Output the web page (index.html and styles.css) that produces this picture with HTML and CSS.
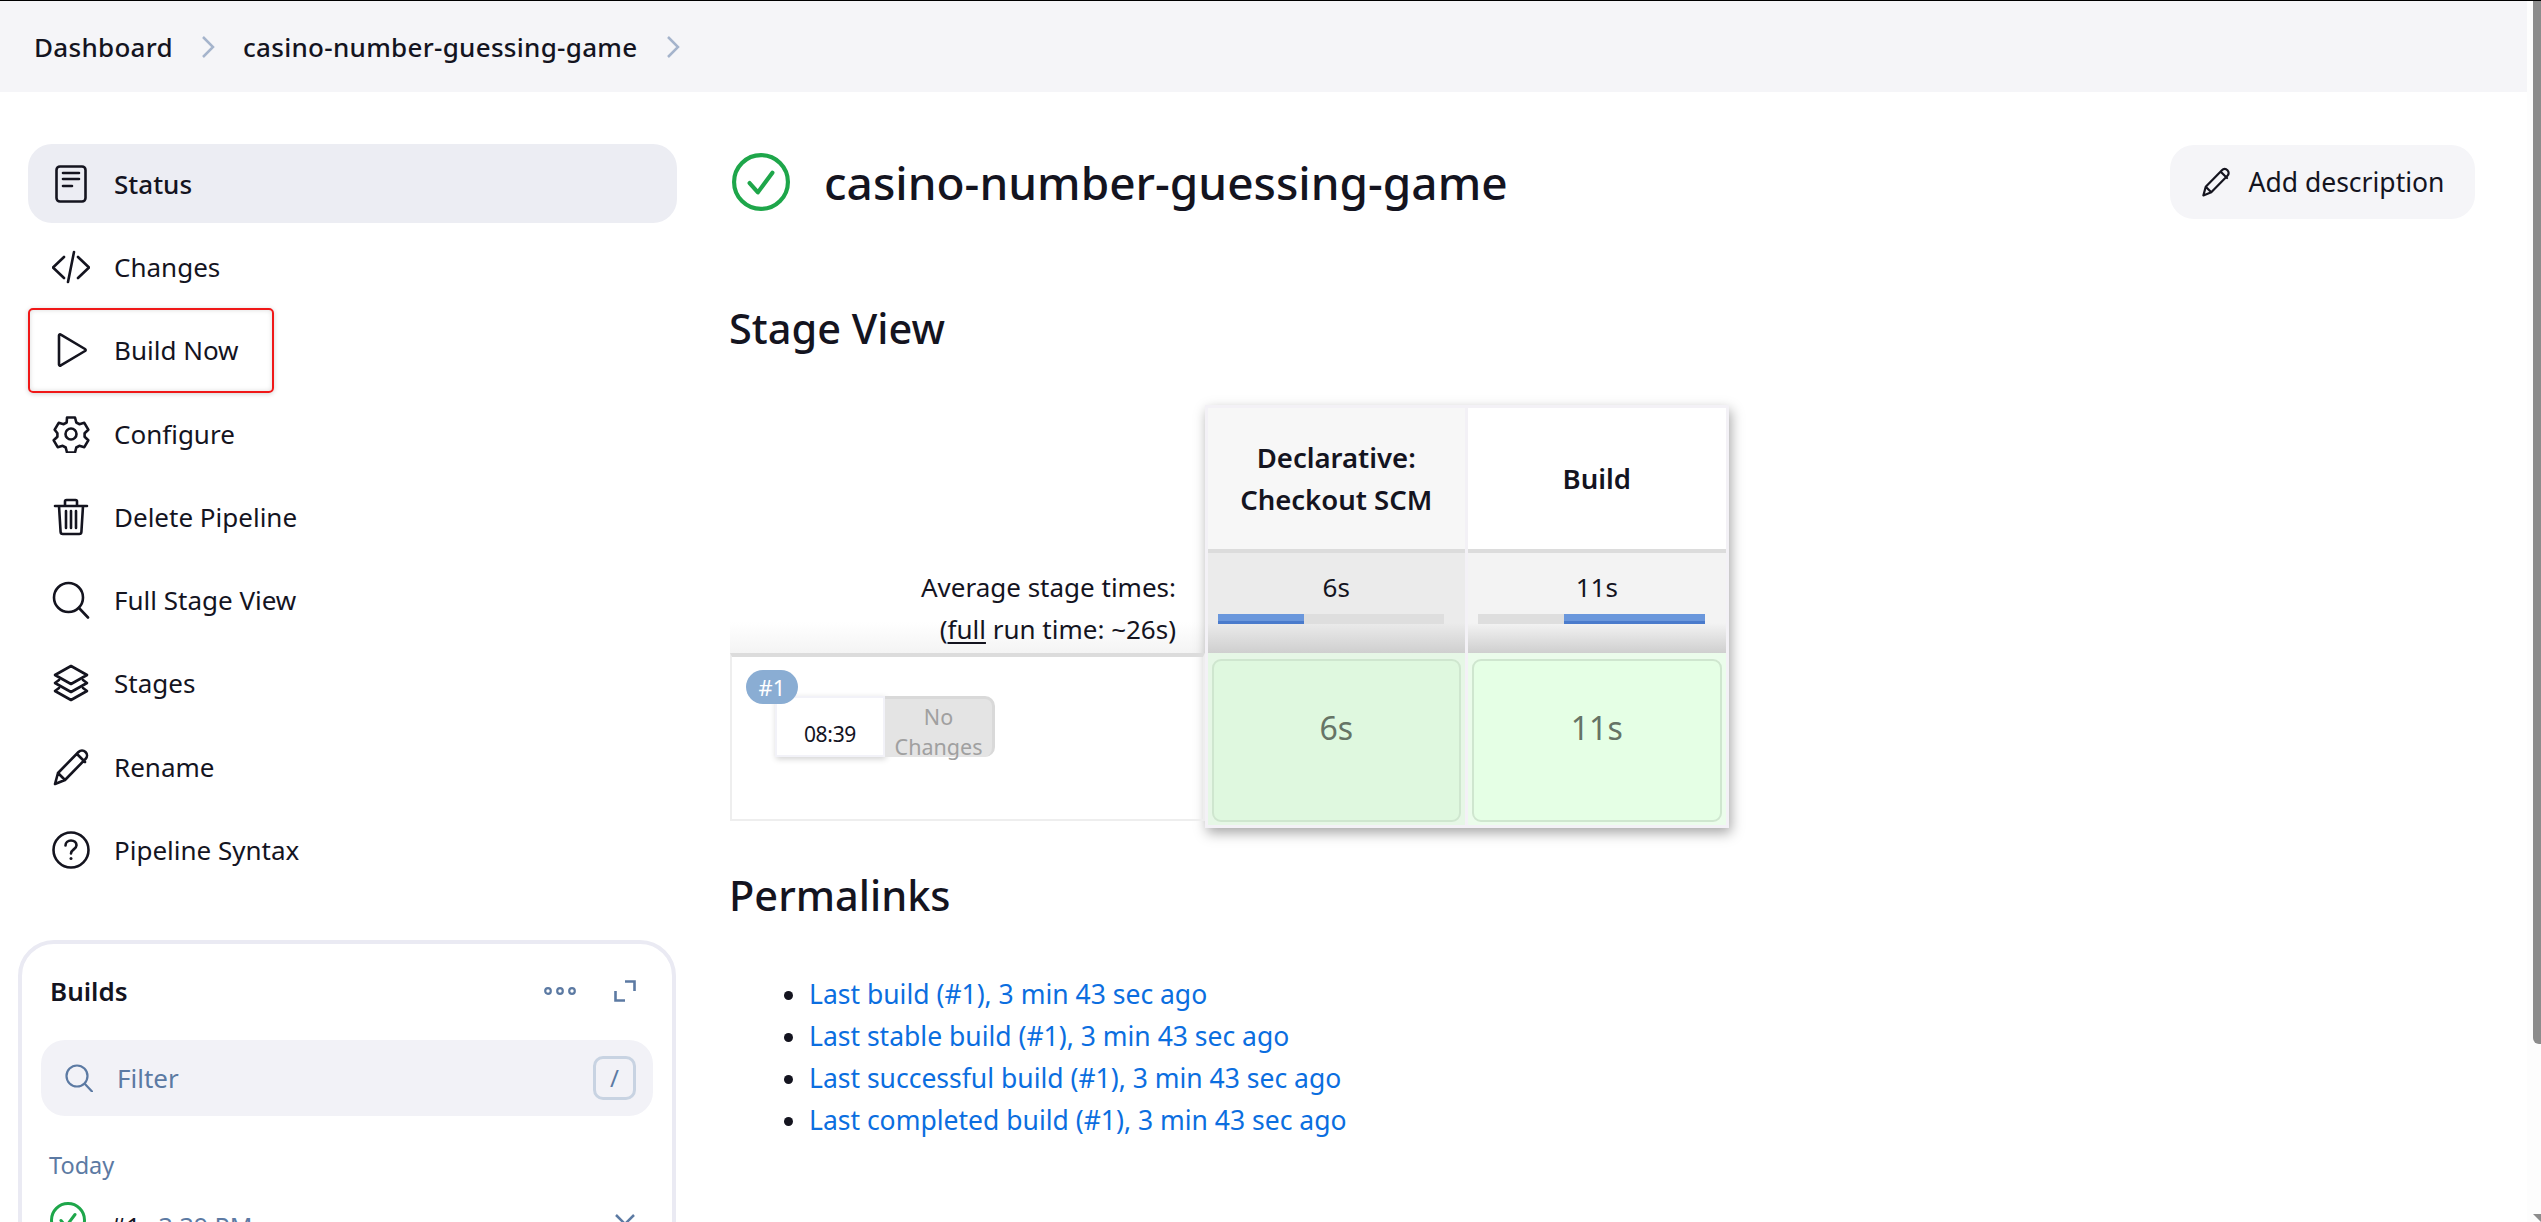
FILE: index.html
```html
<!DOCTYPE html>
<html lang="en">
<head>
<meta charset="utf-8">
<title>casino-number-guessing-game</title>
<link rel="stylesheet" href="styles.css">
</head>
<body>
<div class="page">
  <nav class="crumbs">
    <a class="crumb">Dashboard</a>
    <svg class="crumb-sep" viewBox="0 0 16 30"><path d="M3 5l10 10L3 25"/></svg>
    <a class="crumb">casino-number-guessing-game</a>
    <svg class="crumb-sep" viewBox="0 0 16 30"><path d="M3 5l10 10L3 25"/></svg>
  </nav>
  <div class="layout">
    <aside class="side">
      <ul class="tasks">
        <li class="task active">
          <svg class="ti" viewBox="0 0 38 38"><rect x="4.500" y="1.500" width="29" height="35" rx="3.500"/><path d="M11 8h16M11 14h16M11 21h9"/></svg>
          <span>Status</span>
        </li>
        <li class="task">
          <svg class="ti" viewBox="0 0 38 38"><path d="M12 9L1 19.500 12 30M26 9l11 10.500L26 30M22 4l-6 30"/></svg>
          <span>Changes</span>
        </li>
        <li class="task boxed">
          <svg class="ti" viewBox="0 0 38 38"><path d="M7 4.500c0-1 1-1.500 1.800-.9L33 18c.9.6.9 1.400 0 2L8.800 34.400c-.8.6-1.800.1-1.800-.9z"/></svg>
          <span>Build Now</span>
        </li>
        <li class="task">
          <svg class="ti" viewBox="0 0 38 38"><path d="M15 2.500h8l1.300 5 3 1.700 5-1.400 4 6.900-3.700 3.600v3.400l3.700 3.600-4 6.900-5-1.400-3 1.700-1.300 5h-8l-1.300-5-3-1.700-5 1.400-4-6.900 3.700-3.600v-3.400L2.700 14.700l4-6.900 5 1.400 3-1.700z" stroke-linejoin="round"/><circle cx="19" cy="19" r="5.500"/></svg>
          <span>Configure</span>
        </li>
        <li class="task">
          <svg class="ti" viewBox="0 0 38 38"><path d="M3 8h32M13 8V3.500c0-1 .6-1.500 1.500-1.500h9c.9 0 1.500.5 1.500 1.500V8M7 8l1.600 26c.1 1.300 1 2 2.200 2h16.400c1.200 0 2.100-.7 2.200-2L31 8M14 13v17M19 13v17M24 13v17"/></svg>
          <span>Delete Pipeline</span>
        </li>
        <li class="task">
          <svg class="ti" viewBox="0 0 38 38"><circle cx="16.500" cy="16.500" r="14.500"/><path d="M27 27l9 9.500"/></svg>
          <span>Full Stage View</span>
        </li>
        <li class="task">
          <svg class="ti" viewBox="0 0 38 38"><path d="M19 2l16 9-16 9-16-9zM7 16l-4 3 16 9 16-9-4-3M7 24l-4 3 16 9 16-9-4-3" stroke-linejoin="round"/></svg>
          <span>Stages</span>
        </li>
        <li class="task">
          <svg class="ti" viewBox="0 0 38 38"><path d="M3 36l3-11L26.500 4c2-2 5-2 7 0s2 5 0 7L13 32zM25 6l8 8M6 25l7 7" stroke-linejoin="round"/></svg>
          <span>Rename</span>
        </li>
        <li class="task">
          <svg class="ti" viewBox="0 0 38 38"><circle cx="19" cy="19" r="17.500"/><path d="M13.500 14.500c0-3 2.400-5 5.500-5s5.500 2 5.500 4.800c0 4-5.500 4.200-5.500 8.200"/><circle class="dot" cx="19" cy="27.500" r="1.500"/></svg>
          <span>Pipeline Syntax</span>
        </li>
      </ul>

      <section class="builds">
        <header class="builds-head">
          <h2 class="builds-title">Builds</h2>
          <div class="builds-tools">
            <svg class="dots" viewBox="0 0 32 10"><circle cx="4" cy="5" r="2.800"/><circle cx="16" cy="5" r="2.800"/><circle cx="28" cy="5" r="2.800"/></svg>
            <svg class="expand" viewBox="0 0 22 22"><path d="M11 1.500h9.500V11M1.500 11v9.500H11"/></svg>
          </div>
        </header>
        <div class="filter">
          <svg class="filter-icon" viewBox="0 0 28 28"><circle cx="12" cy="12" r="10.500"/><path d="M20 20l7 7.500"/></svg>
          <span class="filter-text">Filter</span>
          <kbd class="slash">/</kbd>
        </div>
        <div class="today">Today</div>
        <div class="build-row">
          <svg class="build-ok" viewBox="0 0 36 36"><circle cx="18" cy="18" r="16.500"/><path d="M11 18.500l5 6 9-12"/></svg>
          <span class="build-name">#1</span>
          <span class="build-time">3:39 PM</span>
          <svg class="build-chev" viewBox="0 0 22 13"><path d="M2 2l9 9 9-9"/></svg>
        </div>
      </section>
    </aside>

    <main class="main">
      <header class="title-row">
        <svg class="ok" viewBox="0 0 56 56"><circle cx="28" cy="28" r="26"/><path d="M17 29l8 9 14-19"/></svg>
        <h1 class="title">casino-number-guessing-game</h1>
        <button class="add-desc">
          <svg class="pencil" viewBox="0 0 38 38"><path d="M3 36l3-11L26.500 4c2-2 5-2 7 0s2 5 0 7L13 32zM25 6l8 8M6 25l7 7" stroke-linejoin="round"/></svg>
          <span>Add description</span>
        </button>
      </header>

      <h2 class="section stage-title">Stage View</h2>

      <div class="stage">
        <div class="stage-left">
          <div class="avg-label">
            <div>Average stage times:</div>
            <div>(<u>full</u> run time: ~26s)</div>
          </div>
          <div class="run">
            <div class="run-badge">#1</div>
            <div class="run-info">
              <div class="run-time">08:39</div>
              <div class="run-changes">No Changes</div>
            </div>
          </div>
        </div>
        <div class="stage-grid">
          <div class="col col-a">
            <div class="head">Declarative:<br>Checkout SCM</div>
            <div class="avg">
              <div class="avg-time">6s</div>
              <div class="bar"><div class="fill fill-a"></div></div>
            </div>
            <div class="cellwrap"><div class="cell">6s</div></div>
          </div>
          <div class="col col-b">
            <div class="head">Build</div>
            <div class="avg">
              <div class="avg-time">11s</div>
              <div class="bar"><div class="fill fill-b"></div></div>
            </div>
            <div class="cellwrap"><div class="cell">11s</div></div>
          </div>
        </div>
      </div>

      <h2 class="section perm-title">Permalinks</h2>
      <ul class="perm">
        <li><a>Last build (#1), 3 min 43 sec ago</a></li>
        <li><a>Last stable build (#1), 3 min 43 sec ago</a></li>
        <li><a>Last successful build (#1), 3 min 43 sec ago</a></li>
        <li><a>Last completed build (#1), 3 min 43 sec ago</a></li>
      </ul>
    </main>
  </div>
</div>
<div class="scrollbar"><div class="thumb"></div><div class="arrow"></div></div>
</body>
</html>
```

FILE: styles.css
```css
* { box-sizing: border-box; }
html, body { margin: 0; height: 100%; overflow: hidden; }
body {
  background: #fff;
  color: #14141f;
  font-family: "Noto Sans", "Open Sans", sans-serif;
  font-size: 26px;
  display: flex;
  border-top: 1px solid #000;
}
.page { width: 2527px; height: 1221px; overflow: hidden; flex: none; }
.scrollbar { width: 14px; height: 1221px; background: #fdfdfd; position: relative; flex: none; }
.thumb { position: absolute; right: 0; top: -1px; width: 8px; height: 1044px; background: #8c8c8c; border-radius: 0 0 0 6px; }
.arrow { position: absolute; right: 0; bottom: 0; width: 0; height: 0; border-top: 8px solid #8c8c8c; border-left: 8px solid transparent; }

.crumbs { height: 91px; background: #f5f5f8; display: flex; align-items: center; padding: 0 0 0 34px; font-weight: 500; }
.crumb { font-size: 26px; letter-spacing: 0.3px; }
.crumb-sep { width: 16px; height: 30px; margin: 0 27px; fill: none; stroke: #a5b4cc; stroke-width: 2.500; }

.layout { display: flex; }
.side { width: 730px; flex: none; padding: 52px 0 0 18px; }
.tasks { list-style: none; margin: 0; padding: 0 0 0 10px; width: 659px; display: flex; flex-direction: column; gap: 4px; }
.task { height: 79.300px; display: flex; align-items: center; padding-left: 24px; gap: 24px; border-radius: 24px; }
.task.active { background: #ecedf3; font-weight: 500; }
.task.boxed { position: relative; }
.task.boxed::after { content: ""; box-sizing: border-box; position: absolute; left: 0; top: -3px; width: 246px; height: 85px; border: 2px solid #f01818; border-radius: 5px; box-shadow: 0 1px 5px rgba(0,0,0,.18), inset 0 0 5px rgba(0,0,0,.14); pointer-events: none; }
.ti { width: 38px; height: 38px; flex: none; fill: none; stroke: #14141f; stroke-width: 2.600; stroke-linecap: round; stroke-linejoin: round; }
.ti .dot { fill: #14141f; stroke: none; }

.builds { margin-top: 50px; width: 658px; height: 400px; border: 4px solid #eaeaf3; border-radius: 36px; padding: 24px 19px 0; }
.builds-head { display: flex; align-items: center; justify-content: space-between; padding: 0 0 0 9px; height: 46px; }
.builds-title { margin: 0; font-size: 26px; font-weight: 600; }
.builds-tools { display: flex; align-items: center; gap: 38px; padding-right: 17px; }
.dots { width: 32px; height: 10px; fill: none; stroke: #5c7aa3; stroke-width: 2.200; }
.expand { width: 22px; height: 22px; fill: none; stroke: #5c7aa3; stroke-width: 2.600; }
.filter { margin-top: 26px; height: 76px; background: #f2f2f7; border-radius: 24px; display: flex; align-items: center; padding: 0 17px 0 24px; color: #5c7aa3; }
.filter-icon { width: 28px; height: 28px; flex: none; fill: none; stroke: #5c7aa3; stroke-width: 2.200; stroke-linecap: round; }
.filter-text { margin-left: 24px; flex: 1; }
.slash { width: 43px; height: 44px; border: 3px solid #c8d3e2; border-radius: 10px; display: flex; align-items: center; justify-content: center; font-family: inherit; font-size: 24px; }
.today { margin-top: 34px; padding-left: 8px; color: #5c7aa3; font-size: 23.500px; height: 30px; line-height: 30px; }
.build-row { margin-top: 22px; display: flex; align-items: flex-start; padding-left: 9px; font-size: 25px; }
.build-ok { width: 36px; height: 36px; flex: none; fill: none; stroke: #1ea64a; stroke-width: 3; stroke-linecap: round; stroke-linejoin: round; }
.build-name { margin-left: 24px; margin-top: 7px; }
.build-time { margin-left: 18px; margin-top: 7px; color: #5c7aa3; flex: 1; }
.build-chev { width: 22px; height: 13px; margin: 11px 17px 0 0; fill: none; stroke: #5c7aa3; stroke-width: 2.500; }

.main { flex: 1; min-width: 0; padding: 0 52px 0 0; }
.title-row { display: flex; align-items: center; height: 74px; margin-top: 53px; position: relative; }
.ok { width: 58px; height: 58px; flex: none; margin-left: 2px; fill: none; stroke: #1ea64a; stroke-width: 4; stroke-linecap: round; stroke-linejoin: round; }
.title { margin: 0 0 0 34px; font-size: 46px; font-weight: 500; flex: 1; }
.add-desc { width: 305px; height: 74px; background: #f5f5f8; border: 0; border-radius: 24px; display: flex; align-items: center; justify-content: center; gap: 18px; font: inherit; font-size: 26.500px; color: inherit; padding: 0; }
.pencil { width: 30px; height: 30px; fill: none; stroke: #14141f; stroke-width: 2.800; stroke-linecap: round; }
.section { margin: 0 0 0 -1px; font-size: 41.500px; font-weight: 500; line-height: 52px; }
.stage-title { margin-top: 83px; }

.stage { display: flex; margin-top: 51px; height: 423px; }
.stage-left { width: 475px; flex: none; padding-top: 144px; }
.avg-label { height: 104px; padding: 17px 29px 0 0; text-align: right; line-height: 42px; background: linear-gradient(to bottom, #fff 70%, #f4f4f4 100%); }
.avg-label u { text-underline-offset: 3px; }
.run { position: relative; height: 168px; border: 2px solid #eee; border-top: 4px solid #dcdcdc; }
.run-badge { position: absolute; left: 14px; top: 13px; width: 52px; height: 34px; border-radius: 17px; background: #8aadd3; color: #fff; font-size: 22px; display: flex; align-items: center; justify-content: center; z-index: 1; }
.run-info { position: absolute; left: 43px; top: 39px; display: flex; height: 61px; }
.run-time { width: 110px; background: #fff; border: 2px solid #f2f2f8; box-shadow: 1px 2px 6px rgba(0,0,0,.18); font-size: 21px; letter-spacing: -0.3px; display: flex; align-items: center; justify-content: center; padding-top: 14px; }
.run-changes { width: 110px; background: #e4e4e4; border-top: 3px solid #d9d9d9; border-right: 3px solid #d9d9d9; border-radius: 0 10px 10px 0; color: #a0a0a0; font-size: 21.500px; line-height: 30px; text-align: center; padding-top: 3px; }

.stage-grid { display: flex; width: 524px; height: 423px; padding: 3px; gap: 3px; background: #f3f1f6; box-shadow: 2px 5px 12px rgba(0,0,0,.35); }
.col { width: 257px; display: flex; flex-direction: column; }
.col-b { width: 259px; }
.head { height: 141px; display: flex; align-items: center; justify-content: center; text-align: center; font-size: 27.500px; font-weight: 600; line-height: 42px; }
.col-a .head { background: #f7f7f7; }
.col-b .head { background: #fff; }
.avg { height: 104px; border-top: 4px solid #dcdcdc; text-align: center; padding-top: 14px; position: relative; }
.col-a .avg { background: linear-gradient(to bottom, #ebebeb 70%, #cfcfcf 100%); }
.col-b .avg { background: linear-gradient(to bottom, #f3f3f3 70%, #cfcfcf 100%); }
.avg-time { line-height: 40px; height: 44px; }
.bar { height: 10px; margin: 3px 21px 0 10px; background: #dedede; position: relative; }
.fill { position: absolute; top: 0; bottom: 0; background: #6a97dc; border-bottom: 3px solid #4a7bcc; }
.fill-a { left: 0; width: 38%; }
.fill-b { right: 0; width: 62%; }
.cellwrap { flex: 1; padding: 6px 4px 3px; }
.col-a .cellwrap { background: #e6f7e6; }
.col-b .cellwrap { background: #ebfceb; }
.cell { height: 100%; border: 2px solid #cfe6cf; border-radius: 9px; display: flex; align-items: center; justify-content: center; padding-bottom: 26px; font-size: 32px; color: #667466; }
.col-a .cell { background: #dff8df; }
.col-b .cell { background: #e5ffe5; }

.perm-title { margin-top: 41px; }
.perm { margin: 52px 0 0; padding: 0 0 0 79px; font-size: 26.500px; line-height: 42px; color: #0b6ee0; }
.perm li::marker { color: #14141f; }
```
